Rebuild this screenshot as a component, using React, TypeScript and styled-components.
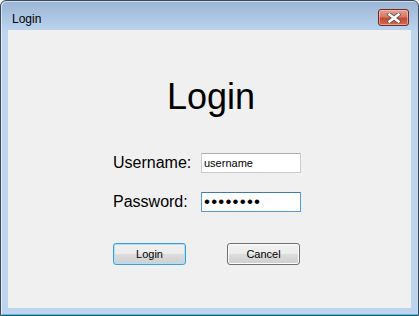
import React from "react";
import styled, { createGlobalStyle } from "styled-components";

const Global = createGlobalStyle`
  html, body { margin: 0; padding: 0; background: #ffffff; }
  body { width: 419px; height: 316px; overflow: hidden; font-family: "Liberation Sans", Arial, sans-serif; }
`;

const Window = styled.div`
  box-sizing: border-box;
  width: 419px;
  height: 316px;
  display: flex;
  flex-direction: column;
  border: 1px solid #3c4a5a;
  border-radius: 6px 6px 0 0;
  background: linear-gradient(#9ab5d4 0px, #aec7e4 18px, #bcd4ee 30px, #bcd4ee 100%);
  box-shadow: inset 1px 1px 0 rgba(255, 255, 255, 0.55), inset 0 -1px 0 #3fc6e8;
  overflow: hidden;
`;

const TitleBar = styled.div`
  height: 29px;
  flex: none;
  display: flex;
  align-items: center;
  justify-content: space-between;
  padding: 0 9px 0 11px;
`;

const Title = styled.span`
  font-size: 12px;
  color: #000000;
  padding-top: 6px;
`;

const CloseButton = styled.button`
  box-sizing: border-box;
  width: 31px;
  height: 17px;
  margin-top: 4px;
  padding: 0;
  display: flex;
  align-items: center;
  justify-content: center;
  border: 1px solid #6b2a22;
  border-radius: 3px;
  background: linear-gradient(#e8a091 0%, #d77866 45%, #c24a35 55%, #d06a4c 100%);
  box-shadow: inset 0 0 0 1px rgba(255, 210, 200, 0.55);
`;

const Client = styled.div`
  flex: 1;
  margin: 0 7px 7px 7px;
  background: #f0f0f0;
  display: flex;
  flex-direction: column;
`;

const Heading = styled.h1`
  margin: 46px 0 0 0;
  font-weight: normal;
  font-size: 36px;
  line-height: 41px;
  text-align: center;
  color: #000000;
  padding-left: 3px;
`;

const Form = styled.div`
  margin: 36px 0 0 105px;
  display: grid;
  grid-template-columns: 88px 100px;
  row-gap: 19px;
`;

const Label = styled.label`
  font-size: 16px;
  line-height: 20px;
  color: #000000;
`;

const TextBox = styled.input<{ $focused?: boolean }>`
  box-sizing: border-box;
  width: 100px;
  height: 20px;
  margin: 0;
  padding: 0 2px;
  border: 1px solid ${(p) => (p.$focused ? "#5b9bd5" : "#c8cdd3")};
  border-top-color: ${(p) => (p.$focused ? "#3d7bad" : "#abadb3")};
  border-radius: 1px;
  background: #ffffff;
  font-family: "Liberation Sans", Arial, sans-serif;
  font-size: 11px;
  color: #000000;
  outline: none;
`;

const PasswordBox = styled(TextBox)`
  font-size: 17px;
  letter-spacing: 1.2px;
  padding-left: 2px;
`;

const Buttons = styled.div`
  margin: 31px 0 0 105px;
  display: flex;
  gap: 41px;
`;

const Button = styled.button<{ $default?: boolean }>`
  box-sizing: border-box;
  width: 73px;
  height: 22px;
  margin: 0;
  padding: 0;
  border: 1px solid ${(p) => (p.$default ? "#3c9ee0" : "#707070")};
  border-radius: 3px;
  background: linear-gradient(#f2f2f2 0%, #ebebeb 50%, #dddddd 50%, #cfcfcf 100%);
  box-shadow: inset 0 0 0 1px ${(p) => (p.$default ? "#aee0f8" : "#fcfcfc")};
  font-family: "Liberation Sans", Arial, sans-serif;
  font-size: 11px;
  color: #000000;
`;

export default function App() {
  return (
    <>
      <Global />
      <Window>
        <TitleBar>
          <Title>Login</Title>
          <CloseButton aria-label="Close">
            <svg width="14" height="10" viewBox="0 0 14 10">
              <path
                d="M2.5 1.5 L11.5 8.5 M11.5 1.5 L2.5 8.5"
                stroke="#4a4a4a"
                strokeWidth="4"
                strokeLinecap="square"
              />
              <path
                d="M2.5 1.5 L11.5 8.5 M11.5 1.5 L2.5 8.5"
                stroke="#ffffff"
                strokeWidth="2.6"
                strokeLinecap="square"
              />
            </svg>
          </CloseButton>
        </TitleBar>
        <Client>
          <Heading>Login</Heading>
          <Form>
            <Label htmlFor="user">Username:</Label>
            <TextBox id="user" defaultValue="username" />
            <Label htmlFor="pass">Password:</Label>
            <PasswordBox id="pass" type="password" defaultValue="12345678" $focused />
          </Form>
          <Buttons>
            <Button $default>Login</Button>
            <Button>Cancel</Button>
          </Buttons>
        </Client>
      </Window>
    </>
  );
}
